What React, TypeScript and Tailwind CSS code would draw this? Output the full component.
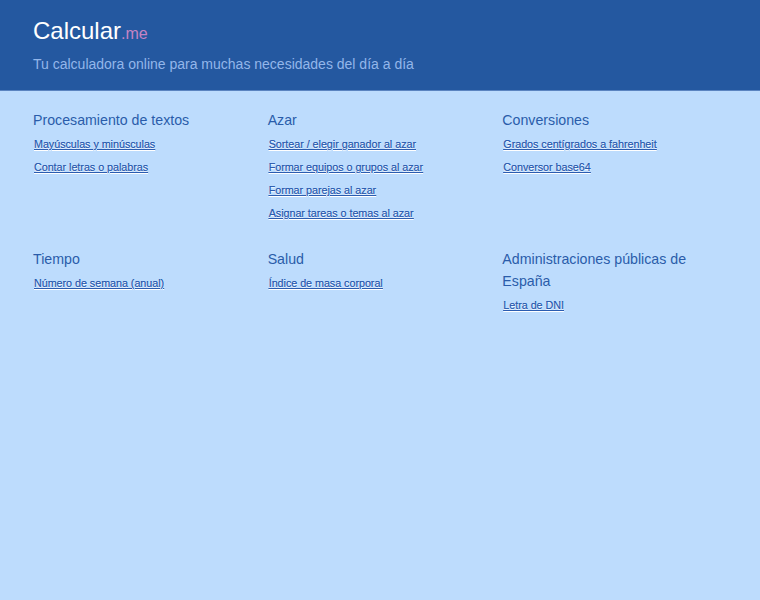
import React from "react";

const sections = [
  { title: "Procesamiento de textos", links: ["Mayúsculas y minúsculas", "Contar letras o palabras"] },
  { title: "Azar", links: ["Sortear / elegir ganador al azar", "Formar equipos o grupos al azar", "Formar parejas al azar", "Asignar tareas o temas al azar"] },
  { title: "Conversiones", links: ["Grados centígrados a fahrenheit", "Conversor base64"] },
  { title: "Tiempo", links: ["Número de semana (anual)"] },
  { title: "Salud", links: ["Índice de masa corporal"] },
  { title: "Administraciones públicas de España", links: ["Letra de DNI"] },
];

export default function App() {
  return (
    <div className="min-h-[600px] bg-[#bddcfd] font-['Liberation_Sans',Arial,sans-serif]">
      <header className="h-[91px] bg-[#2458a0] border-b border-[#5b84c0] pl-[33px] pt-[16px]">
        <div className="leading-[30px]">
          <span className="text-[24px] text-white">Calcular</span>
          <span className="text-[16px] text-[#c684c4]">.me</span>
        </div>
        <div className="mt-[6px] text-[14px] text-[#93b6ea] leading-[18px]">
          Tu calculadora online para muchas necesidades del día a día
        </div>
      </header>
      <main className="grid grid-cols-3 pl-[33px] pr-[23px] pt-[18px] gap-y-[23px]">
        {sections.map((s) => (
          <section key={s.title} className="pr-[16px]">
            <h2 className="text-[14.2px] leading-[22px] text-[#2a5caa]">{s.title}</h2>
            <ul className="mt-[2px] flex flex-col">
              {s.links.map((l) => (
                <li key={l} className="text-[10.7px] leading-[23px] pl-[1px]">
                  <a href="#" className="text-[#2b5cb0] underline [text-shadow:0_1px_1px_#ffffff,0_0_0.4px_#2b5cb0]">
                    {l}
                  </a>
                </li>
              ))}
            </ul>
          </section>
        ))}
      </main>
    </div>
  );
}
